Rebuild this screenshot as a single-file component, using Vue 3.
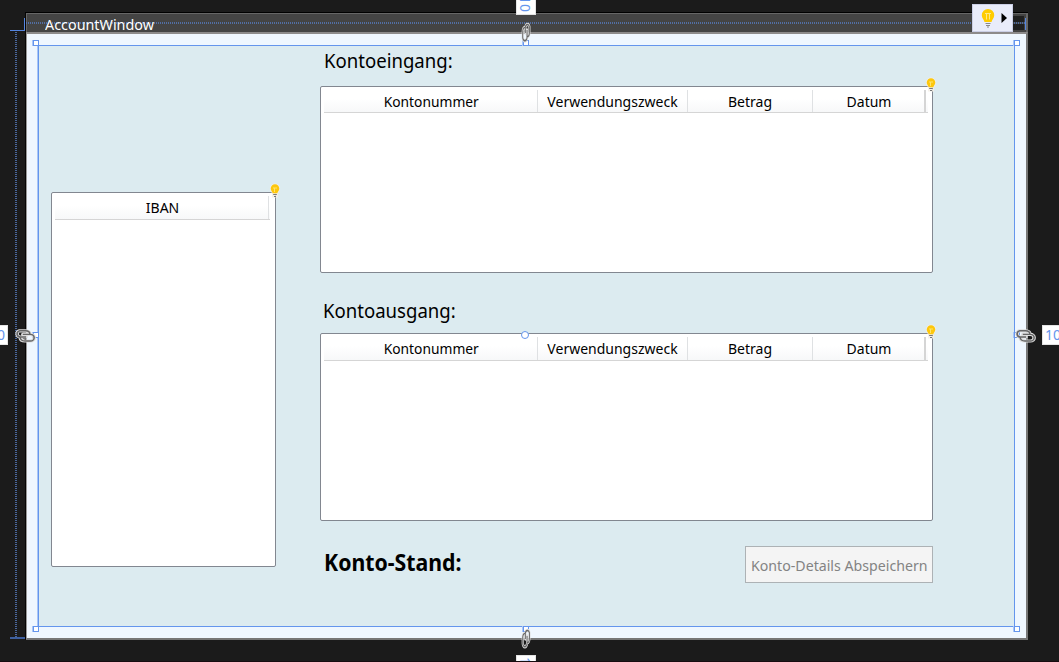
<script setup>
const columns = [
  { name: 'Kontonummer', cls: 'number' },
  { name: 'Verwendungszweck', cls: 'purpose' },
  { name: 'Betrag', cls: 'amount' },
  { name: 'Datum', cls: 'date' },
]
const tables = [
  { title: 'Kontoeingang:', cls: 'incoming' },
  { title: 'Kontoausgang:', cls: 'outgoing' },
]
const bulbs = ['bulb-iban', 'bulb-in', 'bulb-out']
const links = ['top', 'right', 'bottom', 'left']
const handles = ['h-tl', 'h-tr', 'h-bl', 'h-br', 'h-top', 'h-right', 'h-bottom', 'h-left']
const chain = 'M11 8H5.500A3.200 3.200 0 0 1 5 1.800H10.500Q14.500 2 14.500 5.200M8 5.400H15A3.300 3.300 0 0 1 15 12H10Q6 12 5.600 8.500'
</script>

<template>
  <div class="designer">
    <div class="window">
      <header class="titlebar"><span>AccountWindow</span></header>
      <div class="client">
        <main class="panel">
          <section class="iban-list list">
            <div class="head"><div class="cell iban"><span>IBAN</span></div></div>
          </section>
          <section class="details">
            <template v-for="t in tables" :key="t.cls">
              <h2 :class="t.cls"><span>{{ t.title }}</span></h2>
              <div class="list table" :class="t.cls">
                <div class="head">
                  <div v-for="c in columns" :key="c.name" class="cell" :class="c.cls"><span>{{ c.name }}</span></div>
                </div>
              </div>
            </template>
            <footer>
              <strong><span>Konto-Stand:</span></strong>
              <button disabled><span>Konto-Details Abspeichern</span></button>
            </footer>
          </section>
        </main>
      </div>
    </div>

    <!-- selection adorners above the design surface -->
    <i class="corner"></i>
    <i class="guide guide-top"></i>
    <i class="guide guide-left"></i>
    <i class="tick tick-tl-v"></i>
    <i class="tick tick-tl-h"></i>
    <i class="tick tick-bl-h"></i>
    <i class="tick tick-tr-v"></i>
    <i v-for="h in handles" :key="h" class="handle" :class="h"></i>
    <i class="origin"></i>

    <svg v-for="l in links" :key="l" class="link" :class="'link-' + l" viewBox="0 0 20 14">
      <path class="halo" :d="chain" />
      <path class="chain" :d="chain" />
    </svg>

    <div class="margin m-top"><span>10</span></div>
    <div class="margin m-right"><span>10</span></div>
    <div class="margin m-bottom"><span>10</span></div>
    <div class="margin m-left"><span>10</span></div>

    <svg v-for="b in bulbs" :key="b" class="bulb" :class="b" viewBox="0 0 12 16">
      <path d="M6 .5a5 5 0 0 0-5 5c0 2 1.300 3 2 5V14.500h6v-4c.7-2 2-3 2-5a5 5 0 0 0-5-5z" fill="#f4efe6" opacity=".85" />
      <path d="M6 1.300a4.300 4.300 0 0 0-4.300 4.300c0 2 1.500 2.800 2 4.700h4.600c.5-1.900 2-2.700 2-4.700A4.300 4.300 0 0 0 6 1.300z" fill="#fdc70c" />
      <path d="M4 5h4M5.500 5v4" stroke="#ffe46a" fill="none" />
      <path d="M4.200 11.500h3.600M5 13.500h2" stroke="#777" fill="none" />
    </svg>

    <div class="suggest">
      <svg viewBox="0 0 40 28">
        <path d="M16 5a6.200 6.200 0 0 0-6.200 6.200c0 3 2.200 4 2.700 6.800h7c.5-2.800 2.700-3.800 2.700-6.800A6.200 6.200 0 0 0 16 5z" fill="#fc0" />
        <path d="M13 9.500h6M14.500 9.500v6M17.500 9.500v6" stroke="#ffe985" fill="none" />
        <path d="M13.500 19.500h5M14 21.500h4M15 23h2" stroke="#888" fill="none" />
        <path d="M29.500 9v10l5.500-5z" fill="#000" />
      </svg>
    </div>
  </div>
</template>

<style>
html, body { margin: 0; overflow: hidden; background: #1b1b1b; }
</style>

<style scoped>
* { box-sizing: border-box; }
.designer {
  position: relative; width: 1059px; height: 662px; overflow: hidden;
  background: #1b1b1b; padding: 12px 0 0 25px;
  font-family: "Noto Sans", "Open Sans", sans-serif; color: #000;
  border-bottom: 1px solid #170c10;
}
.window { width: 1003px; border-top: 1px solid #000; border-left: 1px solid #050505; }
.titlebar {
  height: 19px; background: #444; border: solid #666; border-width: 1px 2px 0 1px;
  color: #fff; font-size: 14px; line-height: 22px; padding-left: 18px; white-space: nowrap;
}
.titlebar span { display: inline-block; position: relative; z-index: 1; transform: scaleX(1.025); transform-origin: 0 50%; }
.client {
  height: 608px; background: #eff7ff; border: 2px solid #777; border-top-color: #8d8b8b;
  border-left: 1px solid #999; padding: 11px 0 0 11px;
}
.panel {
  width: 977px; height: 582px; background: #dcebf0; border: 1px solid #6495ed;
  box-shadow: -1px 0 #a9c6f7; display: flex; align-items: flex-start;
}
.list { background: #fff; border: 1px solid #828790; border-radius: 2px; padding: 3px; }
.iban-list { width: 225px; height: 375px; margin: 146px 0 0 12px; }
.head {
  display: flex; height: 24px; border-bottom: 1px solid #d5d5d5;
  background: linear-gradient(#fff, #fff 40%, #f7f8f9);
}
.iban-list .head { margin-right: 2px; }
.incoming .head { height: 23px; }
.cell {
  border-right: 1px solid #dfe1e3; font-size: 14px; line-height: 23px;
  display: flex; justify-content: center; white-space: nowrap;
}
.cell span { position: relative; left: .5px; }
.cell.iban { width: 214px; }
.iban span { left: 1px; }
.cell.number { width: 214px; }
.cell.number span { transform: scaleX(.985); }
.cell.purpose { width: 150px; }
.cell.purpose span { left: 0; }
.cell.amount { width: 125px; }
.cell.amount span { left: 0; }
.cell.date { width: 113px; border-right: 2px solid #d5d5d5; }
.details { width: 613px; margin-left: 44px; }
h2 { font-weight: 400; font-size: 19px; line-height: 26px; margin: 0; white-space: nowrap; }
h2.incoming { height: 40px; padding: 2px 0 0 4px; }
h2.outgoing { height: 60px; padding: 25px 0 0 3px; }
h2 span { transform: scaleX(.978); transform-origin: 0 50%; }
.table.incoming { height: 187px; }
.table.outgoing { height: 188px; }
.table .head { margin-right: 1px; }
h2 span, strong span, button span, .cell span { display: inline-block; }
footer { display: flex; justify-content: space-between; padding-top: 25px; }
strong { font-size: 23px; line-height: 32px; padding-left: 4px; width: 160px; white-space: nowrap; }
strong span { transform: scaleX(.925); transform-origin: 0 50%; }
button {
  width: 188px; height: 37px; padding: 1px 0 0; background: #f4f4f4; border: 1px solid #adb2b5;
  color: #838383; font: 14px "Noto Sans", sans-serif; white-space: nowrap;
  display: flex; justify-content: center; align-items: center;
}
button span { transform: scaleX(1.012); }
.guide, .tick, .handle, .origin, .link, .margin, .bulb, .suggest, .corner { position: absolute; }
.corner { left: 1012px; top: 16px; width: 12px; height: 14px; background: #202020; }
.guide-top { left: 26px; top: 22px; width: 1000px; height: 2px; background: repeating-linear-gradient(90deg, #5579bb 0 1px, #444 1px 2px); opacity: .8; }
.guide-left { left: 15px; top: 32px; width: 2px; height: 605px; background: repeating-linear-gradient(#5579bb 0 1px, #1b1b1b 1px 2px); opacity: .8; }
.tick { background: #5585df; }
.tick-tl-v { left: 24px; top: 18px; width: 1px; height: 13px; }
.tick-tl-h { left: 10px; top: 30px; width: 15px; height: 1px; }
.tick-bl-h { left: 10px; top: 637px; width: 15px; height: 2px; background: #3d5f9f; }
.tick-tr-v { left: 1025px; top: 18px; width: 1px; height: 12px; }
.handle { width: 6px; height: 6px; border: 1px solid #6495ed; background: #fff; box-shadow: -1px 0 #a9c6f7; }
.h-tl { left: 33px; top: 40px; }
.h-tr { left: 1014px; top: 40px; }
.h-bl { left: 33px; top: 626px; }
.h-br { left: 1014px; top: 626px; }
.h-top { left: 523px; top: 40px; }
.h-right { left: 1014px; top: 332px; }
.h-bottom { left: 523px; top: 626px; }
.h-left { left: 33px; top: 332px; }
.origin { left: 521px; top: 331px; width: 8px; height: 8px; border: 1px solid #6495ed; border-radius: 50%; background: #fff; }
.link { width: 20px; height: 14px; overflow: visible; }
.halo { fill: none; stroke: #ddd; stroke-width: 3.2px; stroke-linecap: round; }
.chain { fill: none; stroke: #666; stroke-width: 1.4px; }
.link-left { left: 15px; top: 329px; transform: scaleX(1.1); }
.link-right { left: 1015px; top: 329px; transform: scaleX(1.1); }
.link-top { left: 516px; top: 25px; transform: rotate(90deg) scale(1.05, .66); }
.link-bottom { left: 516px; top: 631px; transform: rotate(90deg) scale(1.05, .66); }
.margin { background: #fff; border: 1px solid #e4e4e4; color: #6495ed; font-size: 14px; line-height: 20px; overflow: hidden; }
.margin span { position: absolute; }
.m-top { left: 516px; top: -10px; width: 20px; height: 25px; }
.m-top span { transform: rotate(90deg); left: 0; top: 3px; }
.m-right { left: 1042px; top: 325px; width: 24px; height: 20px; }
.m-right span { left: 2px; top: -1px; }
.m-bottom { left: 516px; top: 655px; width: 20px; height: 24px; }
.m-bottom span { transform: rotate(90deg); left: 0; top: -1px; }
.m-left { left: -15px; top: 325px; width: 23px; height: 20px; }
.m-left span { right: 2px; top: -1px; }
.bulb { width: 12px; height: 16px; }
.bulb-iban { left: 269px; top: 183px; }
.bulb-in { left: 925px; top: 77px; }
.bulb-out { left: 925px; top: 324px; }
.suggest { left: 972px; top: 4px; width: 41px; height: 28px; background: #e9ecfa; border: 1px solid #cbcfe6; }
.suggest svg { display: block; width: 40px; height: 28px; margin: -1px; }
</style>
